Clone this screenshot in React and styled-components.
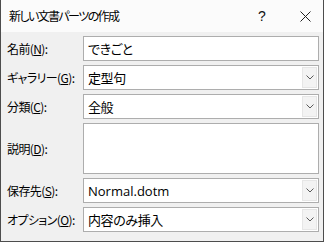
import React from "react";
import styled, { createGlobalStyle } from "styled-components";

const Global = createGlobalStyle`
  html, body { margin: 0; padding: 0; background: #f0f0f0; }
  * { box-sizing: border-box; }
`;

const FONT = `"Noto Sans CJK JP", "Noto Sans", sans-serif`;

const Dialog = styled.div`
  width: 324px;
  height: 242px;
  display: flex;
  flex-direction: column;
  background: #f0f0f0;
  border: 1px solid #4d4d4d;
  border-top: none;
  font-family: ${FONT};
  font-feature-settings: "palt";
  color: #000;
`;

const TitleBar = styled.div`
  height: 32px;
  display: flex;
  align-items: center;
  background: #fbfbfb;
  padding-left: 8px;
`;

const Title = styled.div`
  flex: 1;
  font-size: 12px;
  letter-spacing: -1.6px;
  margin-top: -1px;
`;

const TitleButton = styled.div`
  width: ${(p) => p.$w}px;
  height: 32px;
  display: flex;
  align-items: center;
  justify-content: center;
  font-family: "Liberation Sans", sans-serif;
  font-size: 14px;
  color: #111;
`;

const Body = styled.div`
  flex: 1;
  display: flex;
  flex-direction: column;
  gap: 4px;
  padding: 4px 4px 0 5px;
`;

const Row = styled.div`
  display: flex;
  align-items: center;
`;

const Label = styled.div`
  width: 77px;
  font-size: 12px;
  white-space: nowrap;
  padding-left: 1px;
  letter-spacing: -0.6px;
  u { text-decoration: underline; text-underline-offset: 1px; }
`;

const Field = styled.div`
  flex: 1;
  height: ${(p) => p.$h || 25}px;
  background: #fff;
  border: 1px solid #adadad;
  display: flex;
  align-items: center;
  padding: 1px;
`;

const Value = styled.div`
  flex: 1;
  padding-left: 3px;
  font-size: 13px;
  font-family: ${(p) => (p.$latin ? `"Open Sans", "Noto Sans", sans-serif` : FONT)};
  letter-spacing: ${(p) => (p.$latin ? "0" : "-0.4px")};
  white-space: nowrap;
`;

const DropButton = styled.div`
  width: 15px;
  height: 21px;
  background: #f3f3f3;
  border: 1px solid #e6e6e6;
  display: flex;
  align-items: center;
  justify-content: center;
`;

const Chevron = () => (
  <svg width="8" height="5" viewBox="0 0 8 5">
    <path d="M0.5 0.5 L4 4 L7.5 0.5" fill="none" stroke="#5a5a5a" strokeWidth="1" />
  </svg>
);

const Close = () => (
  <svg width="11" height="11" viewBox="0 0 11 11">
    <path d="M0.5 0.5 L10.5 10.5 M10.5 0.5 L0.5 10.5" stroke="#222" strokeWidth="1" />
  </svg>
);

const rows = [
  { label: "名前", key: "N", value: "できごと" },
  { label: "ギャラリー", key: "G", value: "定型句", drop: true },
  { label: "分類", key: "C", value: "全般", drop: true },
  { label: "説明", key: "D", value: "", h: 51 },
  { label: "保存先", key: "S", value: "Normal.dotm", drop: true, latin: true },
  { label: "オプション", key: "O", value: "内容のみ挿入", drop: true },
];

export default function App() {
  return (
    <>
      <Global />
      <Dialog>
        <TitleBar>
          <Title>新しい文書パーツの作成</Title>
          <TitleButton $w={50}>?</TitleButton>
          <TitleButton $w={36}>
            <Close />
          </TitleButton>
        </TitleBar>
        <Body>
          {rows.map((r) => (
            <Row key={r.key}>
              <Label>
                {r.label}(<u>{r.key}</u>):
              </Label>
              <Field $h={r.h}>
                <Value $latin={r.latin}>{r.value}</Value>
                {r.drop && (
                  <DropButton>
                    <Chevron />
                  </DropButton>
                )}
              </Field>
            </Row>
          ))}
        </Body>
      </Dialog>
    </>
  );
}
